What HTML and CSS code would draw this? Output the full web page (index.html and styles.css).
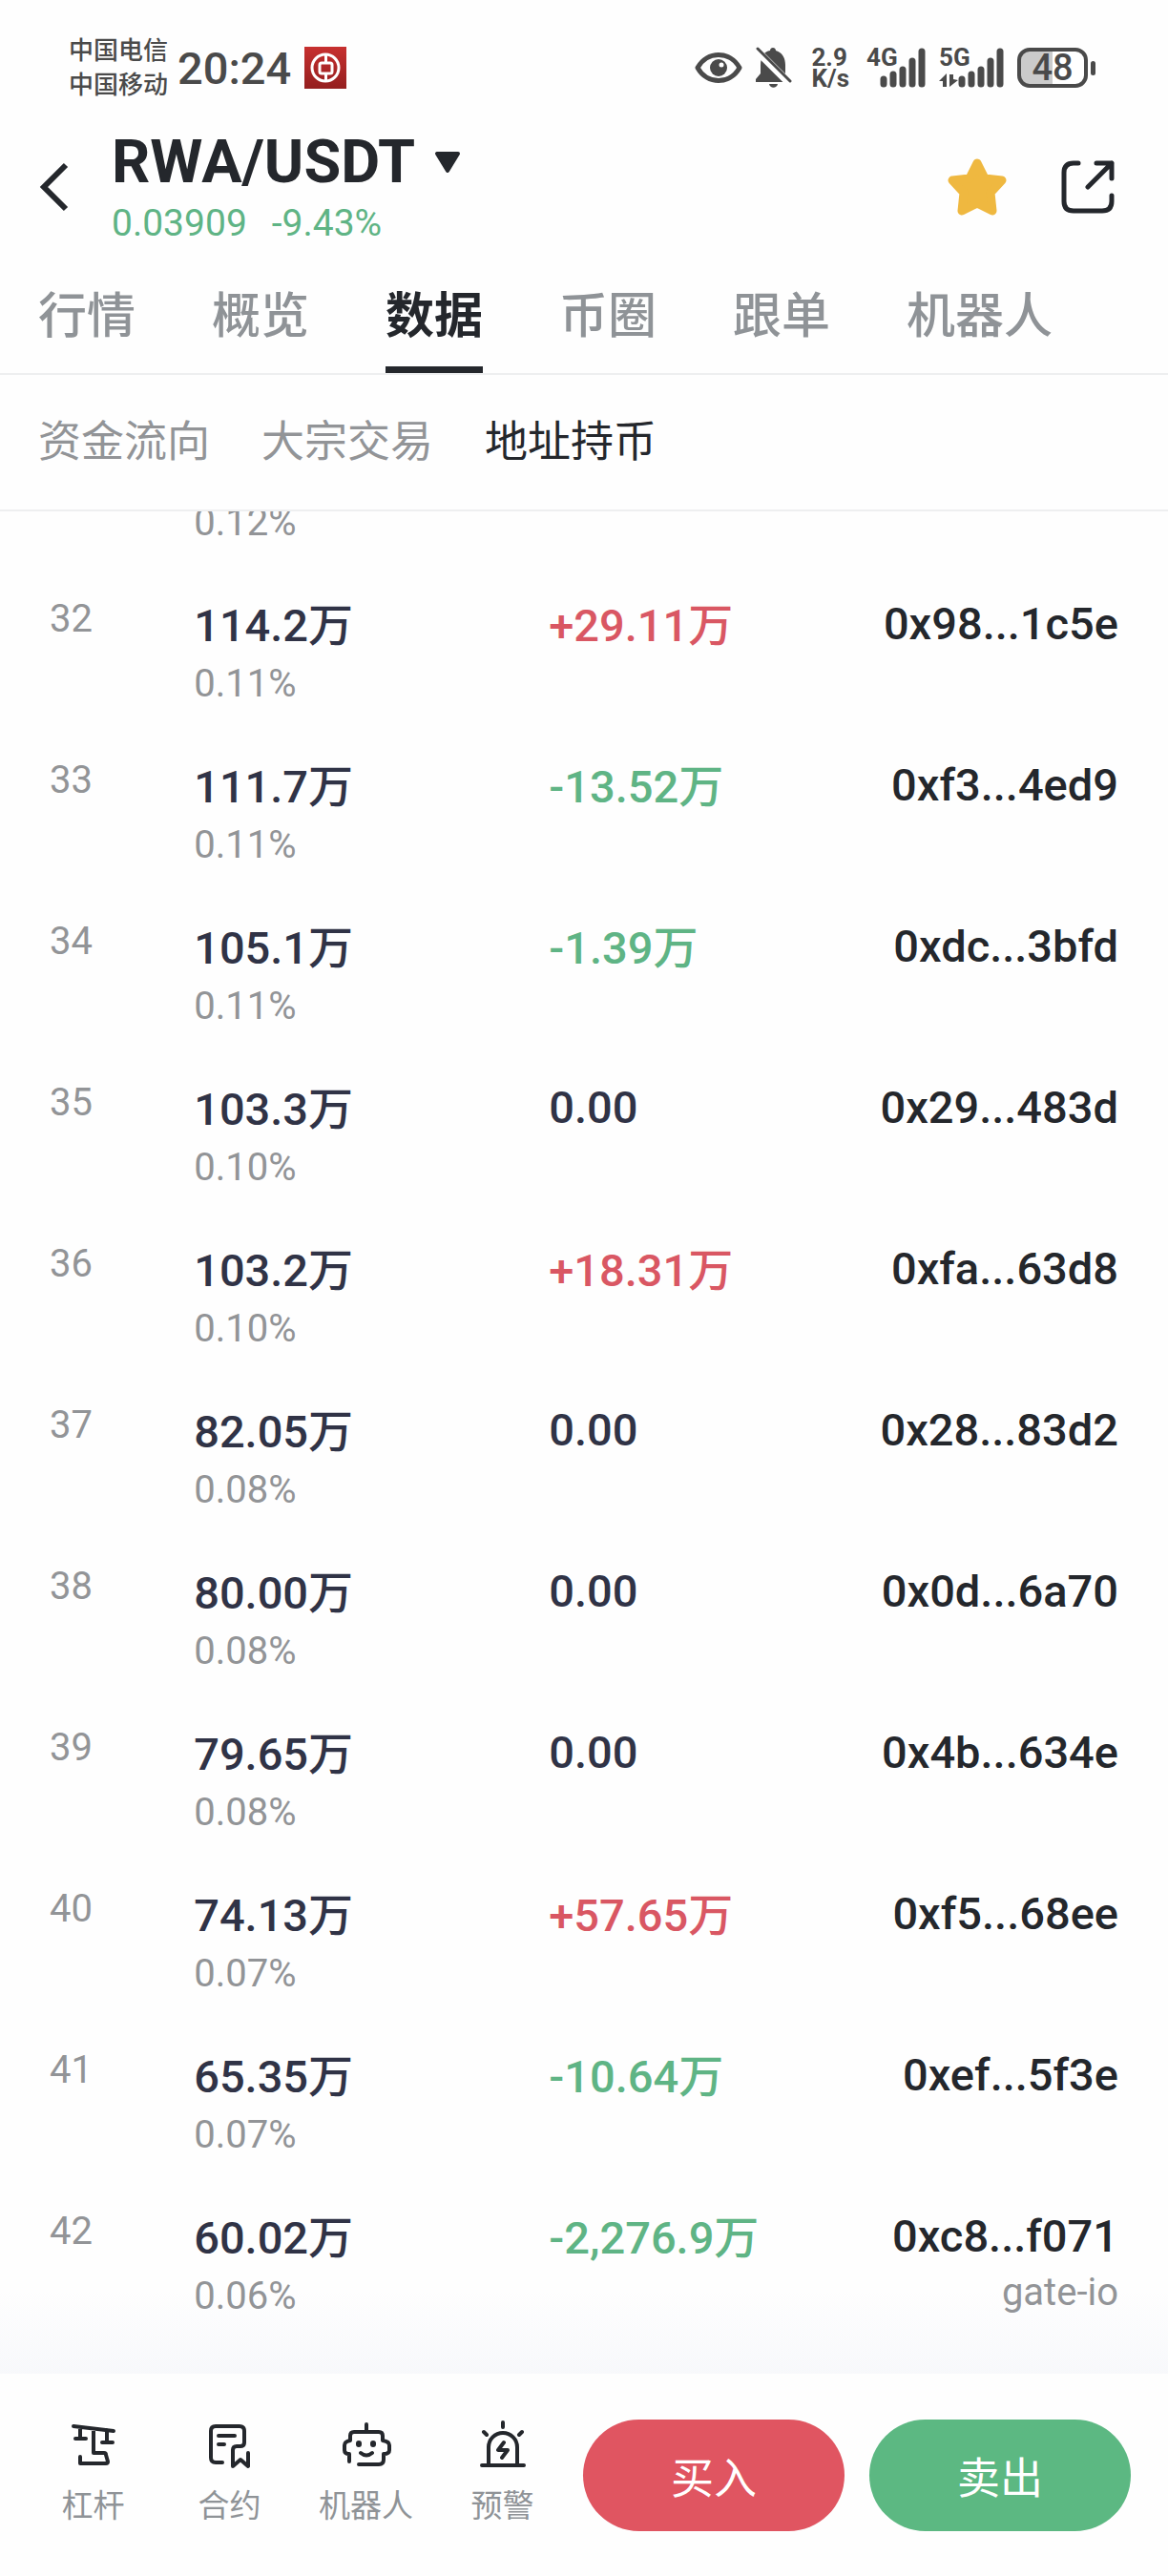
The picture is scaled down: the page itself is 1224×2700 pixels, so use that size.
FILE: index.html
```html
<!DOCTYPE html>
<html lang="zh-CN">
<head>
  <meta charset="UTF-8" />
  <meta name="viewport" content="width=device-width, initial-scale=1" />
  <title>RWA/USDT 地址持币</title>
  <link rel="stylesheet" href="styles.css">
</head>
<body>
  <div class="app">
    <div class="status-bar">
      <div class="carriers">
        <span>中国电信</span>
        <span>中国移动</span>
      </div>
      <span class="time">20:24</span>
      <svg class="bank" width="44" height="44" viewBox="0 0 44 44">
        <defs>
          <linearGradient id="bankRed" x1="0" y1="0" x2="0" y2="1">
            <stop offset="0" stop-color="#c7302f"/>
            <stop offset="1" stop-color="#941f1f"/>
          </linearGradient>
        </defs>
        <rect width="44" height="44" fill="url(#bankRed)"/>
        <g fill="none" stroke="#fff" stroke-width="3">
          <circle cx="22" cy="22" r="14"/>
          <rect x="16" y="17" width="13" height="11" rx="2"/>
          <path d="M22.500 8v9M22.500 28v8"/>
        </g>
      </svg>

      <div class="status-right">
        <svg width="50" height="34" viewBox="0 0 50 34">
          <path d="M3 17C13-1 37-1 47 17C37 35 13 35 3 17Z" fill="none" stroke="#4a4a4a" stroke-width="5" stroke-linejoin="round"/>
          <circle cx="25" cy="17" r="9" fill="#4a4a4a"/>
          <circle cx="28" cy="14" r="2.500" fill="#fff"/>
        </svg>
        <svg class="bell" width="38" height="44" viewBox="0 0 38 44">
          <path d="M0 34L5 28V20C5 10 9 5 15 4C15 0 21 0 21 4C28 6 31 12 31 19V37H0Z" fill="#4a4a4a"/>
          <path d="M14 39H23C22 44 15 44 14 39Z" fill="#4a4a4a"/>
          <path d="M-2 1L37 40" stroke="#fff" stroke-width="8"/>
          <path d="M2 2L36 36" stroke="#4a4a4a" stroke-width="3" stroke-linecap="round"/>
        </svg>
        <div class="speed">
          <span>2.9</span>
          <span>K/s</span>
        </div>
        <div class="signal">
          <span>4G</span>
          <svg width="62" height="42" viewBox="0 0 62 42" stroke="#4a4a4a" stroke-width="7" stroke-linecap="round">
            <path d="M18 33v5M28 28v10M38 23v15M48 14v24M58 4v34"/>
          </svg>
        </div>
        <div class="signal">
          <span>5G</span>
          <svg width="68" height="42" viewBox="0 0 68 42">
            <path d="M24 33v5M34 28v10M44 23v15M54 14v24M64 4v34" stroke="#4a4a4a" stroke-width="7" stroke-linecap="round"/>
            <path d="M0 35L8 27V41H4V35ZM11 28H15V33L20 34L11 41Z" fill="#4a4a4a"/>
          </svg>
        </div>
        <div class="battery"><span>48</span></div>
      </div>
    </div>

    <header class="header">
      <button class="icon-btn" aria-label="返回">
        <svg width="32" height="52" viewBox="0 0 32 52">
          <path d="M29 3L6 26L29 49" fill="none" stroke="#24272c" stroke-width="6"/>
        </svg>
      </button>
      <div class="pair">
        <button class="pair-name">
          RWA/USDT
          <svg width="28" height="24" viewBox="0 0 28 24">
            <path d="M3 3H25L14 21Z" fill="#24272c" stroke="#24272c" stroke-width="4" stroke-linejoin="round"/>
          </svg>
        </button>
        <div class="pair-price">
          <span>0.03909</span>
          <span>-9.43%</span>
        </div>
      </div>
      <button class="icon-btn" aria-label="收藏">
        <svg width="62" height="60" viewBox="0 0 62 60">
          <path d="M31 5L39 21L57 23L45 36L47 55L31 47L15 55L17 36L5 23L23 21Z" fill="#efb840" stroke="#efb840" stroke-width="9" stroke-linejoin="round"/>
        </svg>
      </button>
      <button class="icon-btn" aria-label="分享">
        <svg width="56" height="56" viewBox="0 0 56 56">
          <path d="M18 3H13Q3 3 3 13V43Q3 53 13 53H43Q53 53 53 43V37M37 3H53V19M53 3L28 28" fill="none" stroke="#24272c" stroke-width="5" stroke-linecap="round" stroke-linejoin="round"/>
        </svg>
      </button>
    </header>

    <nav class="tabs">
      <a href="#">行情</a>
      <a href="#">概览</a>
      <a href="#" class="active">数据</a>
      <a href="#">币圈</a>
      <a href="#">跟单</a>
      <a href="#">机器人</a>
    </nav>

    <nav class="sub-tabs">
      <a href="#">资金流向</a>
      <a href="#">大宗交易</a>
      <a href="#" class="active">地址持币</a>
    </nav>

    <main class="list">
      <table class="holders">
        <tbody>
          <tr class="scrolled">
            <td class="rank"></td>
            <td class="amount"><small>0.12%</small></td>
            <td></td>
            <td class="address"></td>
          </tr>
          <tr>
            <td class="rank">32</td>
            <td class="amount">114.2万<small>0.11%</small></td>
            <td class="up">+29.11万</td>
            <td class="address">0x98...1c5e</td>
          </tr>
          <tr>
            <td class="rank">33</td>
            <td class="amount">111.7万<small>0.11%</small></td>
            <td class="down">-13.52万</td>
            <td class="address">0xf3...4ed9</td>
          </tr>
          <tr>
            <td class="rank">34</td>
            <td class="amount">105.1万<small>0.11%</small></td>
            <td class="down">-1.39万</td>
            <td class="address">0xdc...3bfd</td>
          </tr>
          <tr>
            <td class="rank">35</td>
            <td class="amount">103.3万<small>0.10%</small></td>
            <td class="flat">0.00</td>
            <td class="address">0x29...483d</td>
          </tr>
          <tr>
            <td class="rank">36</td>
            <td class="amount">103.2万<small>0.10%</small></td>
            <td class="up">+18.31万</td>
            <td class="address">0xfa...63d8</td>
          </tr>
          <tr>
            <td class="rank">37</td>
            <td class="amount">82.05万<small>0.08%</small></td>
            <td class="flat">0.00</td>
            <td class="address">0x28...83d2</td>
          </tr>
          <tr>
            <td class="rank">38</td>
            <td class="amount">80.00万<small>0.08%</small></td>
            <td class="flat">0.00</td>
            <td class="address">0x0d...6a70</td>
          </tr>
          <tr>
            <td class="rank">39</td>
            <td class="amount">79.65万<small>0.08%</small></td>
            <td class="flat">0.00</td>
            <td class="address">0x4b...634e</td>
          </tr>
          <tr>
            <td class="rank">40</td>
            <td class="amount">74.13万<small>0.07%</small></td>
            <td class="up">+57.65万</td>
            <td class="address">0xf5...68ee</td>
          </tr>
          <tr>
            <td class="rank">41</td>
            <td class="amount">65.35万<small>0.07%</small></td>
            <td class="down">-10.64万</td>
            <td class="address">0xef...5f3e</td>
          </tr>
          <tr>
            <td class="rank">42</td>
            <td class="amount">60.02万<small>0.06%</small></td>
            <td class="down">-2,276.9万</td>
            <td class="address">0xc8...f071<small>gate-io</small></td>
          </tr>
        </tbody>
      </table>
    </main>

    <footer class="bottom-bar">
      <nav class="shortcuts">
        <a href="#">
          <svg viewBox="0 0 52 52">
            <path d="M5 6L47 11M12 7V19M7 19H18M40 10V23M35 23H46M26 9V34H37Q39 34 39 36L41 43Q41 45 39 45H12V38"/>
          </svg>
          杠杆
        </a>
        <a href="#">
          <svg viewBox="0 0 52 52">
            <path d="M18 44H11Q6 44 6 39V11Q6 6 11 6H36Q41 6 41 11V23Q41 27 37 27H33Q29 27 29 31V48L37 41L45 48V34M14 16H31M14 25H20"/>
          </svg>
          合约
        </a>
        <a href="#">
          <svg viewBox="0 0 52 52">
            <path d="M26 4V11M8 43V35Q3 35 3 31V26Q3 22 9 21V16Q9 12 13 12H39Q43 12 43 16V21Q50 22 50 26V31Q50 35 44 35V41Q44 46 39 46H18M20 34Q26 39 32 34"/>
            <path class="eyes" d="M18 24V25M33 24V25"/>
          </svg>
          机器人
        </a>
        <a href="#">
          <svg viewBox="0 0 52 52">
            <path d="M26 2V7M6 12L9 15M46 12L43 15M4 47H48M11 47V28A15 15 0 0 1 41 28V47M27 23L21 31H31L25 39"/>
          </svg>
          预警
        </a>
      </nav>
      <div class="trade">
        <button class="buy">买入</button>
        <button class="sell">卖出</button>
      </div>
    </footer>
  </div>
</body>
</html>
```

FILE: styles.css
```css
* {
  box-sizing: border-box;
}
body {
  margin: 0;
  background: #fefefe;
  color: #24272c;
  font-family: Roboto, "Noto Sans CJK SC", sans-serif;
}
a {
  color: inherit;
  text-decoration: none;
}
button {
  padding: 0;
  border: none;
  background: none;
  color: inherit;
  font-family: inherit;
  cursor: pointer;
}
svg {
  display: block;
}
.app {
  display: flex;
  flex-direction: column;
  height: 100vh;
}

/* status bar */
.status-bar {
  display: flex;
  align-items: center;
  height: 142px;
  padding: 0 84px 0 72px;
  color: #4a4a4a;
}
.carriers {
  display: flex;
  flex-direction: column;
  font-size: 26px;
  font-weight: 500;
  line-height: 36px;
}
.time {
  margin-left: 10px;
  font-size: 47px;
  font-weight: 500;
}
.bank {
  margin-left: 14px;
}
.status-right {
  display: flex;
  align-items: center;
  gap: 14px;
  margin-left: auto;
}
.speed {
  display: flex;
  flex-direction: column;
  margin: 0 4px 0 6px;
  font-size: 26px;
  font-weight: 700;
  line-height: 22px;
}
.signal {
  position: relative;
}
.signal span {
  position: absolute;
  top: 0;
  left: 0;
  font-size: 26px;
  font-weight: 700;
  line-height: 20px;
}
.battery {
  position: relative;
  width: 74px;
  height: 42px;
  border: 4px solid #4a4a4a;
  border-radius: 13px;
  background: linear-gradient(90deg, #cbcbcb 50%, #fff 50%);
  font-size: 38px;
  font-weight: 500;
  line-height: 34px;
  text-align: center;
}
.battery::after {
  content: "";
  position: absolute;
  top: 10px;
  right: -12px;
  width: 5px;
  height: 15px;
  border-radius: 3px;
  background: #4a4a4a;
}

/* header */
.header {
  display: flex;
  align-items: center;
  gap: 57px;
  height: 128px;
  padding: 0 56px 20px 40px;
}
.pair {
  flex: 1;
  padding-top: 12px;
  margin-left: -12px;
}
.pair-name {
  display: flex;
  align-items: center;
  gap: 20px;
  font-size: 63px;
  font-weight: 700;
  line-height: 64px;
}
.pair-price {
  display: flex;
  gap: 26px;
  color: #5fb485;
  font-size: 39px;
  line-height: 64px;
}

/* tabs */
.tabs {
  display: flex;
  gap: 80px;
  padding: 0 40px;
  border-bottom: 2px solid #eeeff0;
  color: #8f9397;
  font-size: 51px;
  font-weight: 500;
  line-height: 104px;
}
.tabs a {
  padding-top: 10px;
  border-bottom: 7px solid transparent;
}
.tabs .active {
  border-color: #24272c;
  color: #24272c;
  font-weight: 700;
}
.sub-tabs {
  display: flex;
  gap: 54px;
  padding: 0 40px;
  border-bottom: 2px solid #eeeff0;
  color: #929497;
  font-size: 45px;
  line-height: 141px;
}
.sub-tabs .active {
  color: #24272c;
}

/* address list */
.list {
  display: flex;
  flex: 1;
  flex-direction: column;
  justify-content: flex-end;
  min-height: 0;
  padding-bottom: 28px;
  overflow: hidden;
}
.holders {
  flex-shrink: 0;
  width: 100%;
  border-collapse: collapse;
  table-layout: fixed;
  font-size: 47px;
  font-weight: 500;
}
.holders tr {
  height: 169px;
}
.holders td {
  padding: 22px 0 0;
  color: #303346;
  line-height: 66px;
  vertical-align: top;
}
.holders small {
  display: block;
  color: #929497;
  font-size: 40px;
  font-weight: 400;
  line-height: 56px;
}
.holders .scrolled td {
  padding-top: 88px;
}
.holders .rank {
  width: 16.6%;
  padding-left: 52px;
  color: #929497;
  font-size: 40px;
  font-weight: 400;
  line-height: 52px;
}
.holders .amount {
  width: 30.4%;
}
.holders .up {
  color: #d95763;
}
.holders .down {
  color: #5fb485;
}
.holders .flat {
  line-height: 62px;
}
.holders .address {
  padding-right: 52px;
  color: #24272c;
  line-height: 62px;
  text-align: right;
}

/* bottom bar */
.bottom-bar {
  position: relative;
  display: flex;
  align-items: center;
  gap: 13px;
  height: 212px;
  padding: 0 39px 0 26px;
  background: #fefefe;
}
.bottom-bar::before {
  content: "";
  position: absolute;
  bottom: 100%;
  left: 0;
  width: 100%;
  height: 90px;
  background: linear-gradient(rgba(90, 110, 180, 0), rgba(90, 110, 180, 0.04));
}
.shortcuts {
  display: grid;
  flex: 1;
  grid-template-columns: repeat(4, 1fr);
}
.shortcuts a {
  display: flex;
  flex-direction: column;
  align-items: center;
  gap: 14px;
  color: #8f9397;
  font-size: 33px;
  line-height: 48px;
}
.shortcuts svg {
  width: 52px;
  height: 52px;
  fill: none;
  stroke: #24272c;
  stroke-width: 4;
  stroke-linecap: round;
  stroke-linejoin: round;
}
.shortcuts .eyes {
  stroke-width: 6;
}
.trade {
  display: flex;
  gap: 26px;
}
.trade button {
  width: 274px;
  height: 117px;
  border-radius: 59px;
  color: #fff;
  font-size: 45px;
}
.trade .buy {
  background: #e05561;
}
.trade .sell {
  background: #5cb882;
}
```
